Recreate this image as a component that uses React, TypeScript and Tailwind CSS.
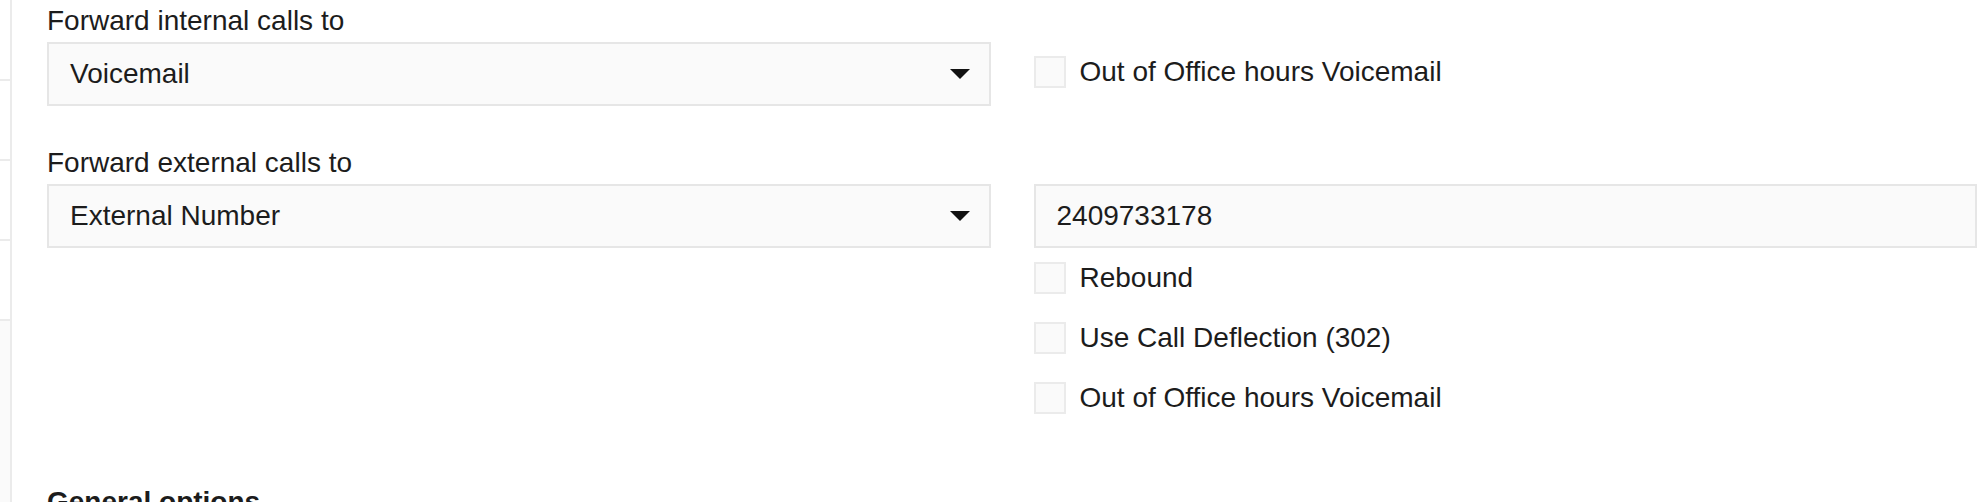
import React from "react";

const font = { fontFamily: '"Liberation Sans", Arial, Helvetica, sans-serif' };

function Caret() {
  return (
    <svg width="20" height="10" viewBox="0 0 20 10" className="shrink-0">
      <polygon points="0,0 20,0 10,10" fill="#111111" />
    </svg>
  );
}

function Select({ value }: { value: string }) {
  return (
    <div className="flex h-[64px] items-center justify-between border-2 border-[#e6e6e6] bg-[#fafafa] pl-[21px] pr-[19px]">
      <span className="leading-[40px]">{value}</span>
      <Caret />
    </div>
  );
}

function Check({ label }: { label: string }) {
  return (
    <label className="flex h-[32px] items-center gap-[14px]">
      <span className="h-[32px] w-[32px] shrink-0 border-2 border-[#ebebeb] bg-[#fafafa]" />
      <span className="leading-[40px]">{label}</span>
    </label>
  );
}

export default function App() {
  return (
    <div className="flex h-[502px] w-full overflow-hidden bg-white text-[28px] text-[#1c1c1c]" style={font}>
      <aside className="flex w-[12px] shrink-0 flex-col border-r-2 border-[#ebebeb]">
        <div className="h-[81px] shrink-0 border-b-2 border-[#ebebeb] bg-white" />
        <div className="h-[80px] shrink-0 border-b-2 border-[#ebebeb] bg-white" />
        <div className="h-[80px] shrink-0 border-b-2 border-[#ebebeb] bg-white" />
        <div className="h-[80px] shrink-0 border-b-2 border-[#ebebeb] bg-white" />
        <div className="flex-1 bg-[#fafafa]" />
      </aside>

      <main className="flex-1 pl-[35px] pr-[7px] pt-[1px]">
        {/* internal */}
        <div className="grid grid-cols-2 gap-x-[43px]">
          <div>
            <div className="mb-[1px] leading-[40px]">Forward internal calls to</div>
            <Select value="Voicemail" />
          </div>
          <div className="pt-[55px]">
            <Check label="Out of Office hours Voicemail" />
          </div>
        </div>

        {/* external */}
        <div className="mt-[37px] grid grid-cols-2 gap-x-[43px]">
          <div>
            <div className="mb-[1px] leading-[40px]">Forward external calls to</div>
            <Select value="External Number" />
          </div>
          <div className="pt-[41px]">
            <div className="flex h-[64px] items-center border-2 border-[#e6e6e6] bg-[#fafafa] px-[21px]">
              <span className="leading-[40px]">2409733178</span>
            </div>
            <div className="mt-[14px] flex flex-col gap-[28px]">
              <Check label="Rebound" />
              <Check label="Use Call Deflection (302)" />
              <Check label="Out of Office hours Voicemail" />
            </div>
          </div>
        </div>

        <h2 className="mt-[68px] font-bold leading-[40px]">General options</h2>
      </main>
    </div>
  );
}
